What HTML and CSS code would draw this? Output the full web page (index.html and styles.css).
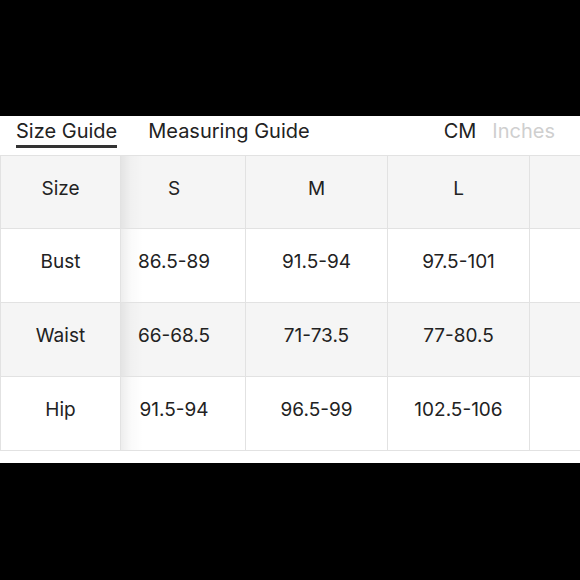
FILE: index.html
```html
<!DOCTYPE html>
<html>
<head>
<meta charset="utf-8">
<link rel="stylesheet" href="styles.css">
</head>
<body>
<div class="panel">
  <div class="tabs">
    <div class="tab active">Size Guide</div>
    <div class="tab">Measuring Guide</div>
    <div class="units">
      <span class="unit on">CM</span>
      <span class="unit off">Inches</span>
    </div>
  </div>
  <div class="table">
    <div class="row head">
      <div class="cell c1">Size</div>
      <div class="cell c2">S</div>
      <div class="cell c3">M</div>
      <div class="cell c4">L</div>
      <div class="cell c5"></div>
    </div>
    <div class="row">
      <div class="cell c1">Bust</div>
      <div class="cell c2">86.5-89</div>
      <div class="cell c3">91.5-94</div>
      <div class="cell c4">97.5-101</div>
      <div class="cell c5"></div>
    </div>
    <div class="row alt">
      <div class="cell c1">Waist</div>
      <div class="cell c2">66-68.5</div>
      <div class="cell c3">71-73.5</div>
      <div class="cell c4">77-80.5</div>
      <div class="cell c5"></div>
    </div>
    <div class="row">
      <div class="cell c1">Hip</div>
      <div class="cell c2">91.5-94</div>
      <div class="cell c3">96.5-99</div>
      <div class="cell c4">102.5-106</div>
      <div class="cell c5"></div>
    </div>
  </div>
</div>
</body>
</html>
```
FILE: styles.css
```css
html, body {
  margin: 0;
  padding: 0;
  background: #000;
  width: 580px;
  height: 580px;
  overflow: hidden;
}
body {
  font-family: Inter, "Liberation Sans", sans-serif;
  color: #222;
}
.panel {
  margin-top: 116px;
  height: 347px;
  background: #fff;
  overflow: hidden;
}
.tabs {
  display: flex;
  height: 39px;
  padding: 0 0 0 16px;
  font-size: 20px;
}
.tab {
  padding-top: 3px;
  line-height: 24px;
  padding-bottom: 2px;
  border-bottom: 3px solid transparent;
  margin-right: 31px;
  align-self: flex-start;
}
.tab.active {
  border-bottom-color: #333;
}
.units {
  margin-left: auto;
  padding-top: 3px;
  line-height: 24px;
  display: flex;
  gap: 16px;
  margin-right: 25px;
}
.unit.off {
  color: #cfcfcf;
}
.table {
  border-top: 1px solid #e2e2e2;
  border-left: 1px solid #e2e2e2;
  width: 700px;
}
.row {
  display: flex;
  background: #fff;
}
.row.head, .row.alt {
  background: #f5f5f5;
}
.cell {
  box-sizing: border-box;
  height: 74px;
  border-right: 1px solid #e2e2e2;
  border-bottom: 1px solid #e2e2e2;
  display: flex;
  align-items: center;
  justify-content: center;
  padding-bottom: 8px;
  font-size: 19px;
  flex: none;
}
.head .cell { height: 73px; }
.c1 { width: 120px; }
.c2 {
  width: 125px;
  padding-right: 18px;
  background: linear-gradient(to right, rgba(0,0,0,0.07), rgba(0,0,0,0.02) 10px, rgba(0,0,0,0) 22px);
}
.c3, .c4, .c5 { width: 142px; }
```
